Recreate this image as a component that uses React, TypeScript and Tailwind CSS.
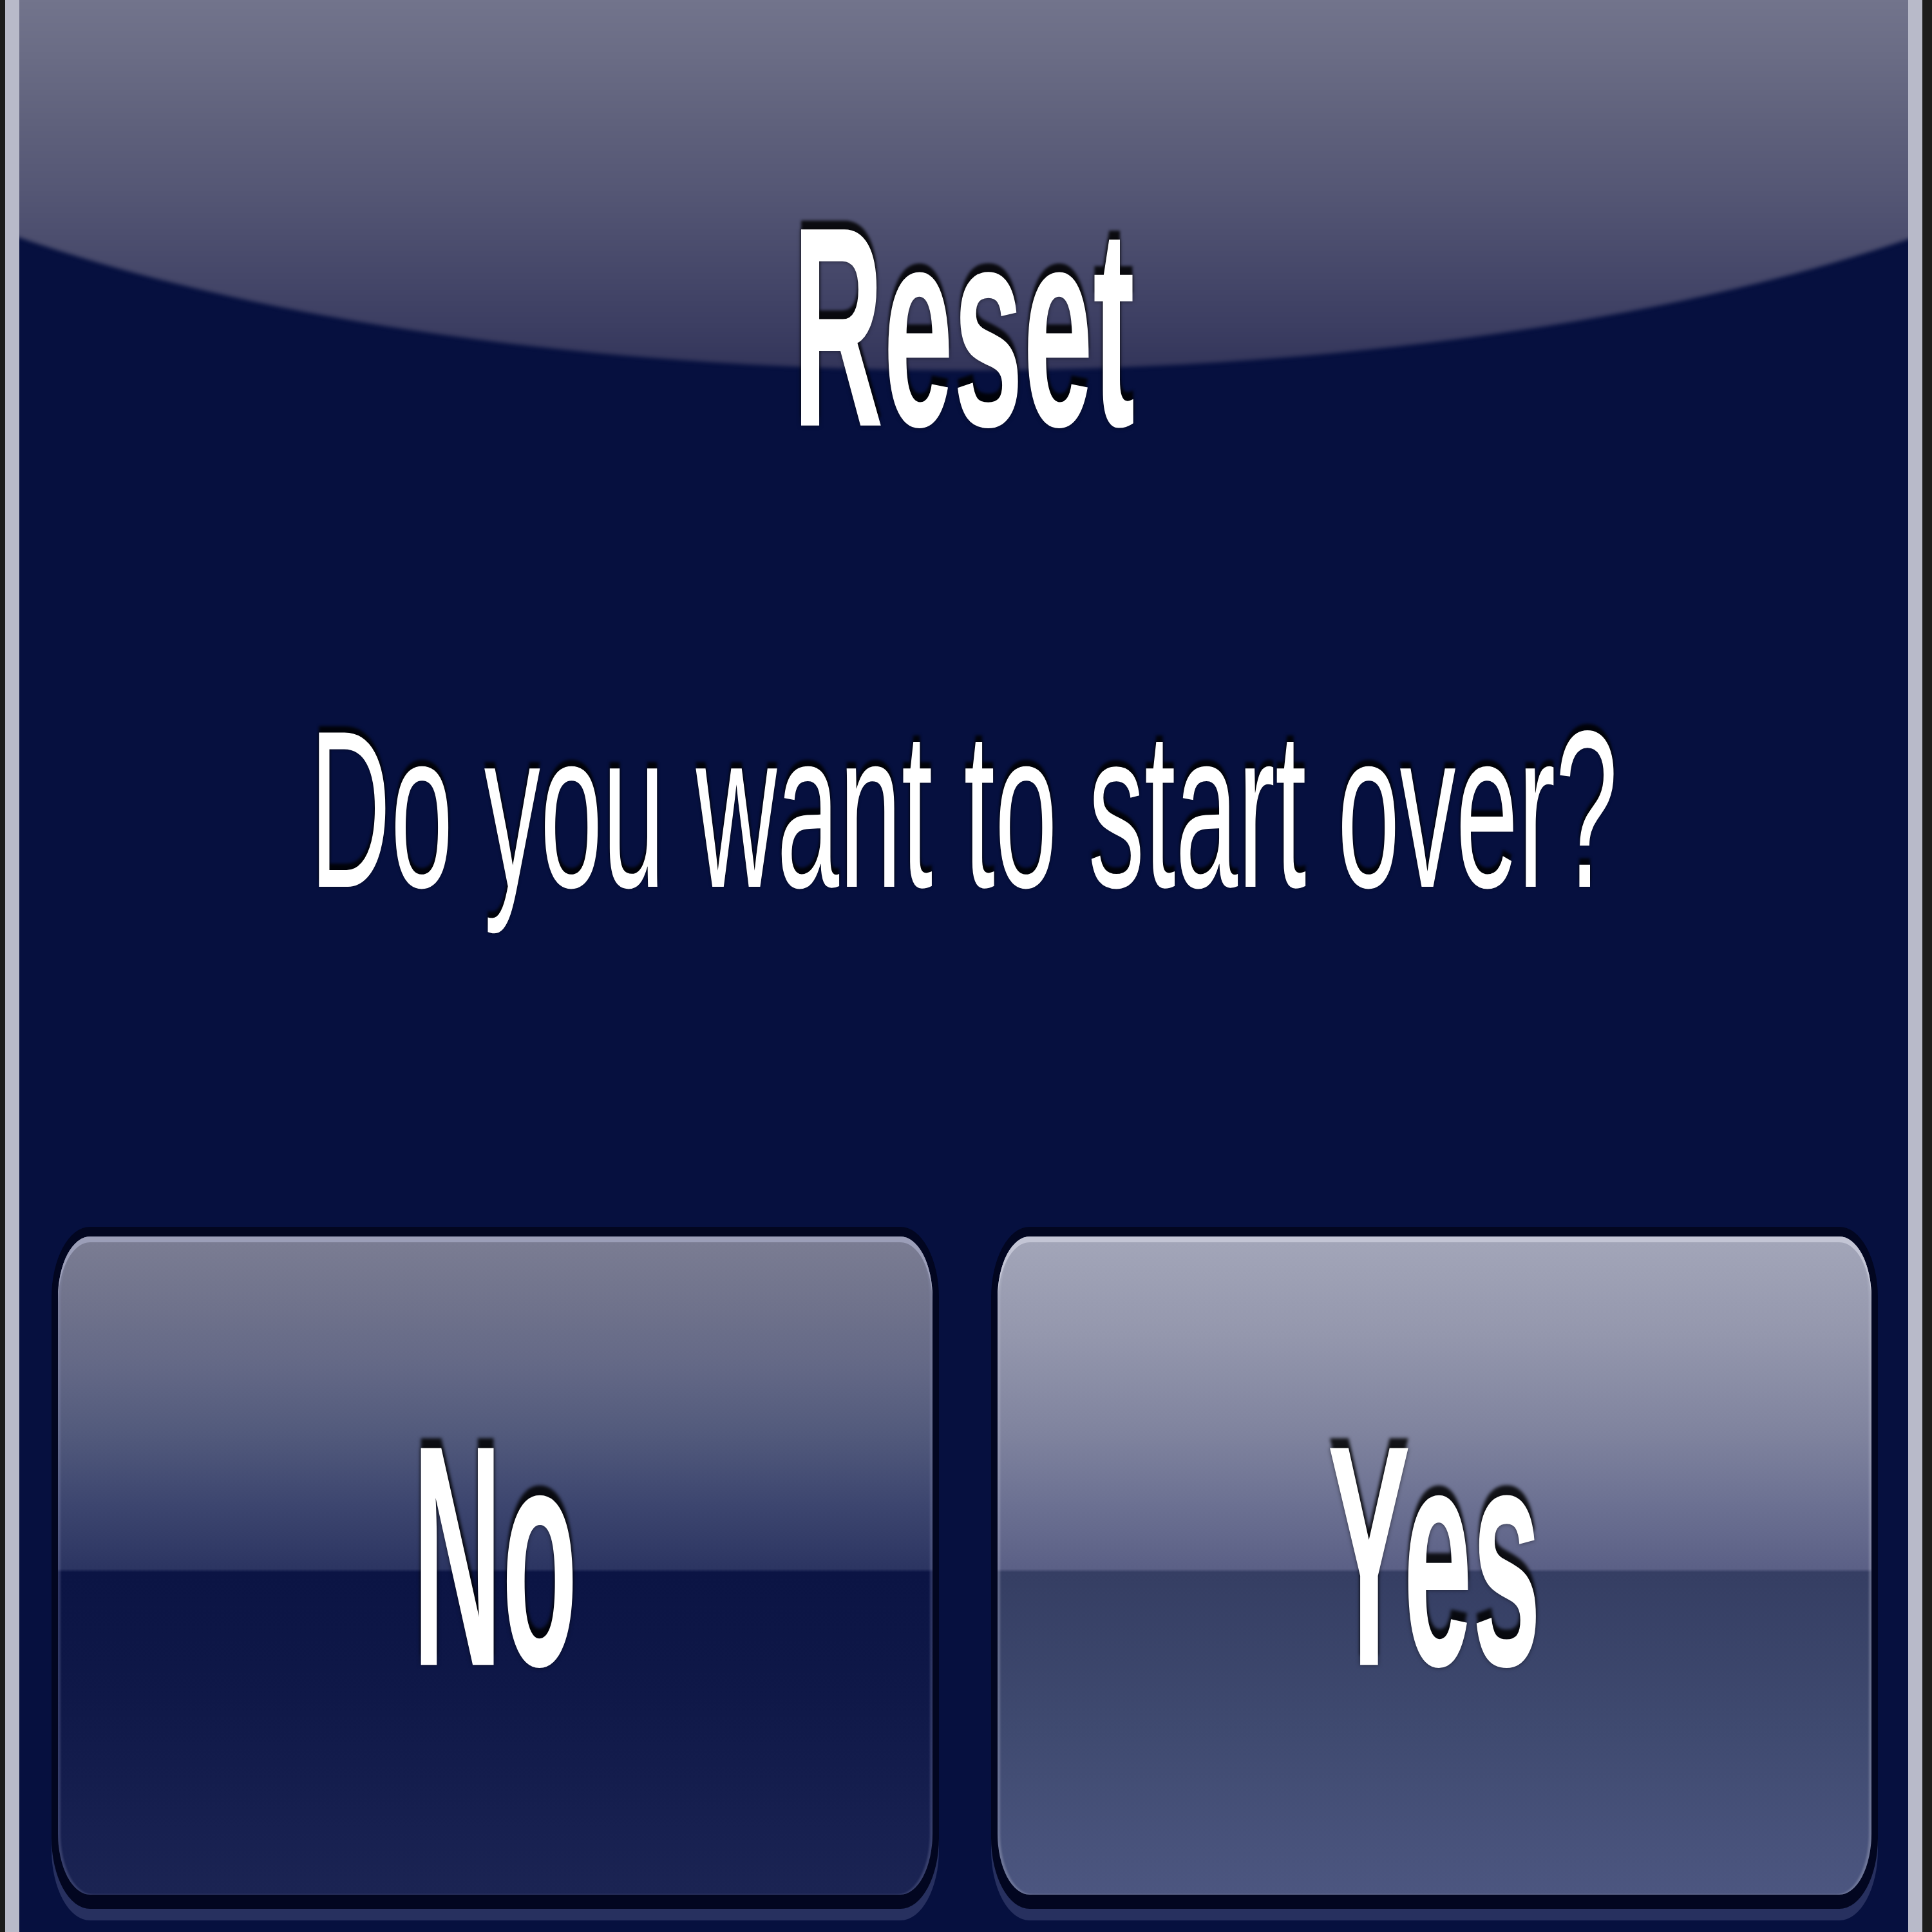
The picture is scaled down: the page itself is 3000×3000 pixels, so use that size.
export default function App() {
  return (
    <div className="w-[3000px] h-[3000px] flex bg-[#1c1c1c] pl-[8px] pr-[15px] overflow-hidden font-['Liberation_Sans',Arial,sans-serif]">
      <div className="relative flex-1 flex flex-col border-x-[22px] border-[#b8bac9] bg-[#06103f] overflow-hidden">
        <div className="absolute left-[-530px] top-[-705px] w-[4000px] h-[1280px] rounded-[50%] blur-[3px] bg-[linear-gradient(to_bottom,#7a7c92_50%,#72748c_55%,#6a6c85_62%,#5f617c_70%,#555775_78%,#494b6c_86%,#3d3f63_94%,#33355a_100%)]" />
        <div className="relative h-[300px] mt-[357px] flex items-center justify-center">
          <span className="block text-[195px] font-bold leading-none text-white scale-y-[2.27] [text-shadow:0_-6px_3px_rgba(0,0,0,0.85),0_0_4px_rgba(0,0,0,0.5)]">
            Reset
          </span>
        </div>
        <div className="relative h-[300px] mt-[450px] flex items-center justify-center">
          <span className="block text-[174px] font-normal leading-none text-white scale-y-[2.0] [text-shadow:0_-5px_3px_rgba(0,0,0,0.85),0_0_3px_rgba(0,0,0,0.5)]">
            Do you want to start over?
          </span>
        </div>
        <div className="relative flex gap-[81px] pl-[50px] pr-[47px] mt-[498px]">
          <div className="flex-1 rounded-[60px_/_110px] bg-[#020620] px-[10px] pt-[15px] pb-[22px] shadow-[0_18px_0_#27305f]">
            <div className="w-full h-[1022px] rounded-[50px_/_95px] flex items-center justify-center pb-[28px] bg-[linear-gradient(to_bottom,#7b7d93_0%,#70738c_10%,#636886_20%,#525a7c_30%,#3e4770_40%,#2c3562_50.5%,#0b1444_51%,#0f1848_70%,#172050_90%,#1b2453_100%)] shadow-[inset_0_9px_0_#9b9eb8,inset_4px_0_3px_rgba(150,155,190,0.25),inset_-4px_0_3px_rgba(150,155,190,0.25)]">
              <span className="block text-[192px] font-bold leading-none text-white scale-y-[2.55] [text-shadow:0_-6px_3px_rgba(0,0,0,0.85),0_0_4px_rgba(0,0,0,0.5)]">
                No
              </span>
            </div>
          </div>
          <div className="flex-1 rounded-[60px_/_110px] bg-[#020620] px-[10px] pt-[15px] pb-[22px] shadow-[0_18px_0_#27305f]">
            <div className="w-full h-[1022px] rounded-[50px_/_95px] flex items-center justify-center pb-[28px] bg-[linear-gradient(to_bottom,#a3a6b9_0%,#9497ad_15%,#7f839e_30%,#6d7293_40%,#5b6086_50.5%,#353e63_51%,#3f4a70_75%,#4c5680_100%)] shadow-[inset_0_9px_0_#c3c5d5,inset_4px_0_3px_rgba(200,202,220,0.3),inset_-4px_0_3px_rgba(200,202,220,0.3)]">
              <span className="block text-[192px] font-bold leading-none text-white scale-y-[2.55] [text-shadow:0_-6px_3px_rgba(0,0,0,0.85),0_0_4px_rgba(0,0,0,0.5)]">
                Yes
              </span>
            </div>
          </div>
        </div>
      </div>
    </div>
  );
}
